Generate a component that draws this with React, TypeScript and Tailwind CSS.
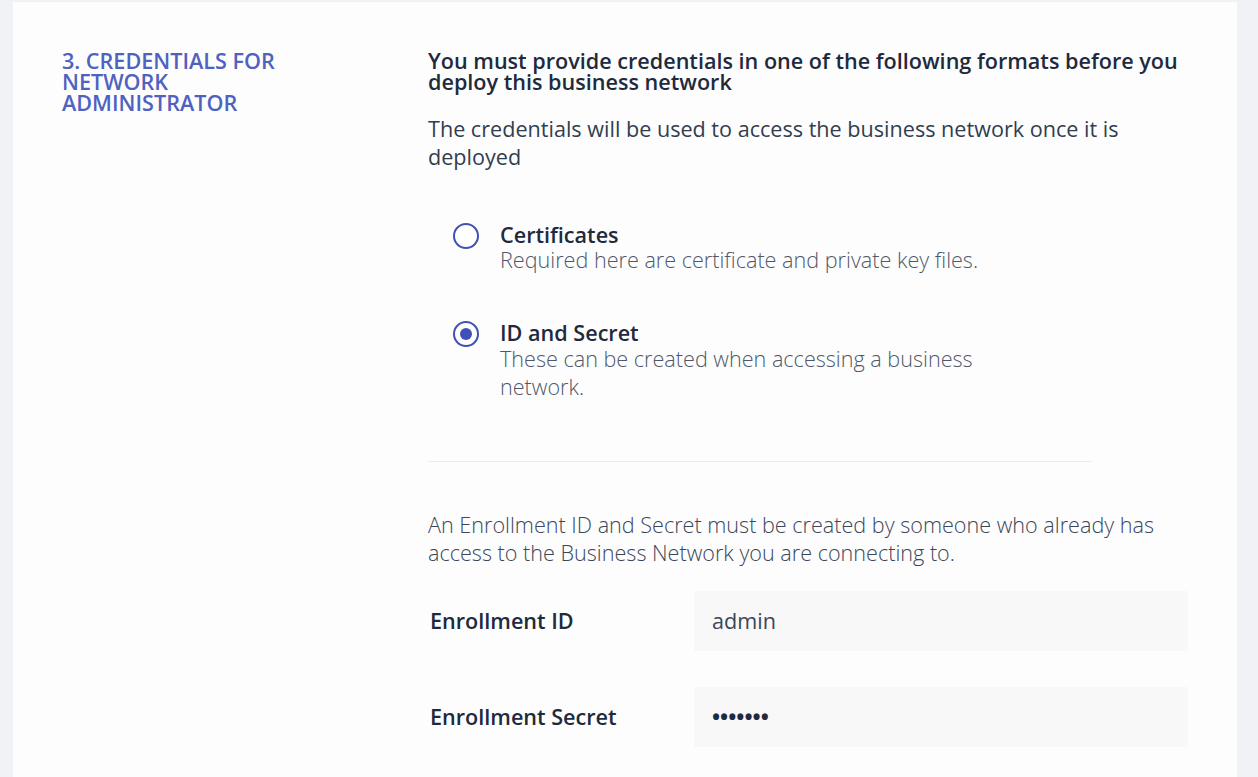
import React from "react";

function Radio({ checked }: { checked?: boolean }) {
  return (
    <span className="mt-[1px] flex h-[26px] w-[26px] shrink-0 items-center justify-center rounded-full border-2 border-[#3f51b5] bg-white">
      {checked && <span className="h-[12px] w-[12px] rounded-full bg-[#3f51b5]" />}
    </span>
  );
}

export default function App() {
  return (
    <div className="min-h-[777px] bg-[#f1f2f6] pl-[13px] pr-[21px] pt-[2px] font-['Open_Sans',sans-serif]">
      <div className="flex min-h-[775px] bg-[#fdfdfd] pt-[48px]">
        <div className="w-[415px] shrink-0 pl-[49px]">
          <h2 className="w-[250px] text-[21.6px] font-semibold uppercase leading-[21px] text-[#4f62c0]">
            3. Credentials for Network Administrator
          </h2>
        </div>
        <div className="w-[765px]">
          <h3 className="text-[21.6px] font-semibold leading-[21px] text-[#1f2a3c]">
            You must provide credentials in one of the following formats before you deploy this business network
          </h3>
          <p className="mt-[23px] text-[21.6px] font-normal leading-[28px] text-[#323d50]">
            The credentials will be used to access the business network once it is deployed
          </p>
          <div className="mt-[51px] flex gap-[21px] pl-[25px]">
            <Radio />
            <div>
              <div className="text-[21.6px] font-semibold leading-[25px] text-[#1f2a3c]">Certificates</div>
              <div className="text-[21.6px] font-light leading-[26px] text-[#4f586a]">
                Required here are certificate and private key files.
              </div>
            </div>
          </div>
          <div className="mt-[47px] flex gap-[21px] pl-[25px]">
            <Radio checked />
            <div className="w-[490px]">
              <div className="text-[21.6px] font-semibold leading-[25px] text-[#1f2a3c]">ID and Secret</div>
              <div className="text-[21.6px] font-light leading-[28px] text-[#4f586a]">
                These can be created when accessing a business network.
              </div>
            </div>
          </div>
          <div className="mt-[60px] h-[1px] w-[664px] bg-[#e9ebf0]" />
          <p className="mt-[49px] text-[21.6px] font-light leading-[28px] text-[#3b4658]">
            An Enrollment ID and Secret must be created by someone who already has access to the Business Network you are connecting to.
          </p>
          <div className="mt-[24px] flex items-center">
            <label className="w-[266px] pl-[2px] text-[21.6px] font-semibold text-[#1f2a3c]">Enrollment ID</label>
            <div className="flex h-[60px] w-[494px] items-center bg-[#f8f8f8] px-[18px] text-[21.6px] text-[#3b4658]">
              admin
            </div>
          </div>
          <div className="mt-[36px] flex items-center">
            <label className="w-[266px] pl-[2px] text-[21.6px] font-semibold text-[#1f2a3c]">Enrollment Secret</label>
            <div className="flex h-[60px] w-[494px] items-center bg-[#f8f8f8] px-[18px] text-[21.6px] font-bold text-[#1f2a3c]">
              •••••••
            </div>
          </div>
        </div>
      </div>
    </div>
  );
}
